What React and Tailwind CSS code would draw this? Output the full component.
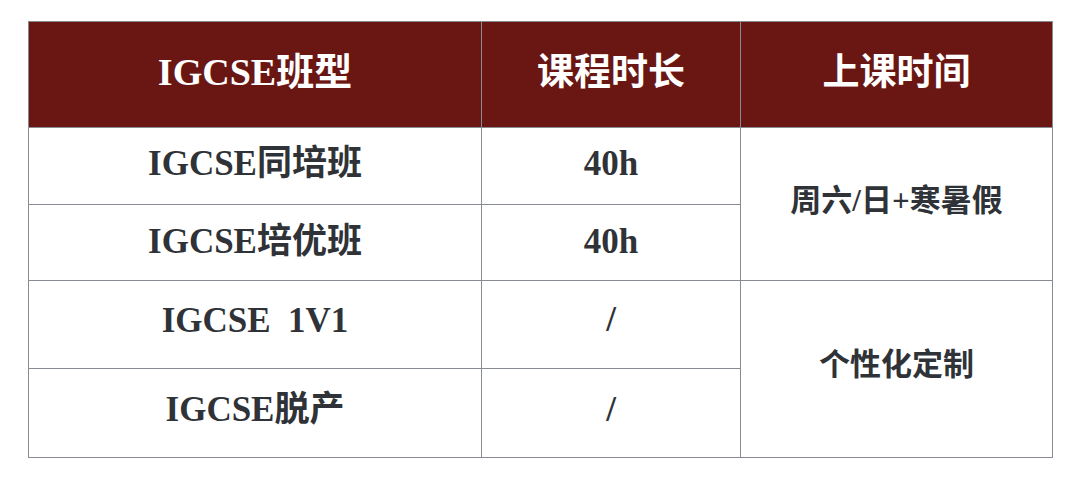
import React from "react";

const font = {
  fontFamily: '"Liberation Serif", "Noto Sans CJK SC", serif',
};

const rows = [
  { name: "IGCSE同培班", hours: "40h" },
  { name: "IGCSE培优班", hours: "40h" },
  { name: "IGCSE  1V1", hours: "/" },
  { name: "IGCSE脱产", hours: "/" },
];

const App = () => {
  return (
    <div className="w-[1080px] h-[492px] bg-white pt-[21px] pl-[28px]" style={font}>
      <div className="grid w-[1025px] grid-cols-[452px_258px_311px] grid-rows-[105px_76px_75px_87px_88px] gap-px p-px bg-[#868c92]">
        <div className="bg-[#6a1714] flex items-center justify-center pb-[4px] text-white text-[38px] font-bold">
          IGCSE班型
        </div>
        <div className="bg-[#6a1714] flex items-center justify-center pb-[4px] text-white text-[37px] font-bold">
          课程时长
        </div>
        <div className="bg-[#6a1714] flex items-center justify-center pb-[4px] text-white text-[37px] font-bold">
          上课时间
        </div>

        {/* row 1 */}
        <div className="bg-white flex items-center justify-center pb-[3px] text-[#2f3338] text-[35px] font-bold">
          {rows[0].name}
        </div>
        <div className="bg-white flex items-center justify-center pb-[3px] text-[#2f3338] text-[35px] font-bold">
          {rows[0].hours}
        </div>
        <div className="row-span-2 bg-white flex items-center justify-center pb-[6px] text-[#2f3338] text-[31px] font-bold">
          周六/日+寒暑假
        </div>

        {/* row 2 */}
        <div className="bg-white flex items-center justify-center text-[#2f3338] text-[35px] font-bold">
          {rows[1].name}
        </div>
        <div className="bg-white flex items-center justify-center text-[#2f3338] text-[35px] font-bold">
          {rows[1].hours}
        </div>

        {/* row 3 */}
        <div className="bg-white flex items-center justify-center pb-[6px] text-[#2f3338] text-[35px] font-bold whitespace-pre">
          {rows[2].name}
        </div>
        <div className="bg-white flex items-center justify-center pb-[8px] text-[#2f3338] text-[35px] font-bold">
          {rows[2].hours}
        </div>
        <div className="row-span-2 bg-white flex items-center justify-center pb-[8px] text-[#2f3338] text-[31px] font-bold">
          个性化定制
        </div>

        {/* row 4 */}
        <div className="bg-white flex items-center justify-center pb-[6px] text-[#2f3338] text-[35px] font-bold">
          {rows[3].name}
        </div>
        <div className="bg-white flex items-center justify-center pb-[6px] text-[#2f3338] text-[35px] font-bold">
          {rows[3].hours}
        </div>
      </div>
    </div>
  );
};

export default App;
